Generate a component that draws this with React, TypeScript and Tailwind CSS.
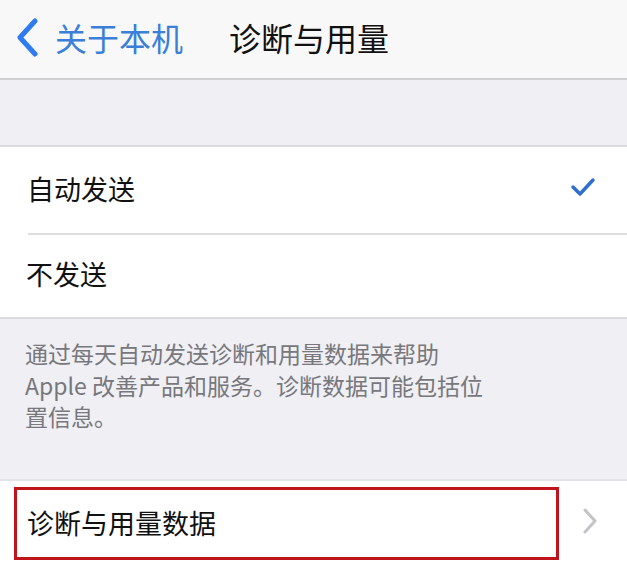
const font = { fontFamily: '"Noto Sans CJK SC", "Noto Sans", sans-serif' };

export default function App() {
  return (
    <div className="w-[627px] h-[570px] overflow-hidden bg-[#efeff4]" style={font}>
      {/* Nav bar */}
      <div className="h-[80px] bg-[#f8f8f8] border-b-2 border-[#cfcfd3] flex items-center">
        <svg width="24" height="40" viewBox="0 0 24 40" className="ml-[15px] mb-[2px]">
          <path d="M20 3 L5 19.5 L20 36" fill="none" stroke="#2f7cf0" strokeWidth="5" strokeLinecap="round" strokeLinejoin="round" />
        </svg>
        <span className="ml-[16px] text-[32px] leading-none text-[#3b7fd6] mb-[4px]">关于本机</span>
        <span className="ml-[46px] text-[32px] leading-none text-[#111] mb-[4px]">诊断与用量</span>
      </div>

      {/* Spacer band */}
      <div className="h-[67px] border-b-2 border-[#dcdce0]" />

      {/* Options */}
      <div className="bg-white">
        <div className="h-[86px] flex items-center justify-between pl-[27px] pr-[30px]">
          <span className="text-[27px] text-[#111] leading-none mt-[-3px]">自动发送</span>
          <svg width="28" height="22" viewBox="0 0 28 22" className="mt-[-6px]">
            <path d="M4 11 L11 18 L24 4" fill="none" stroke="#2f6fd0" strokeWidth="3.5" strokeLinecap="round" strokeLinejoin="round" />
          </svg>
        </div>
        <div className="ml-[28px] h-[2px] bg-[#dededf]" />
        <div className="h-[84px] flex items-center pl-[26px] border-b-2 border-[#dcdce0]">
          <span className="text-[27px] text-[#111] leading-none mt-[-6px]">不发送</span>
        </div>
      </div>

      {/* Footer text */}
      <div className="h-[162px] pl-[25px] pr-[40px] pt-[19px] border-b-2 border-[#e4e4e8]">
        <p className="text-[23px] leading-[31.5px] text-[#77777c]">
          通过每天自动发送诊断和用量数据来帮助
          <br />
          Apple 改善产品和服务。诊断数据可能包括位
          <br />
          置信息。
        </p>
      </div>

      {/* Diagnostics row */}
      <div className="relative bg-white h-[90px] flex items-center justify-between pl-[27px] pr-[29px]">
        <span className="text-[27px] text-[#111] leading-none mt-[-8px]">诊断与用量数据</span>
        <svg width="16" height="28" viewBox="0 0 16 28" className="mt-[-10px]">
          <path d="M3 3 L13 14 L3 25" fill="none" stroke="#c4c4c8" strokeWidth="3" strokeLinecap="round" strokeLinejoin="round" />
        </svg>
        <div className="absolute left-[14px] top-[6px] w-[545px] h-[73px] border-[3px] border-[#c0141c]" />
      </div>
    </div>
  );
}
